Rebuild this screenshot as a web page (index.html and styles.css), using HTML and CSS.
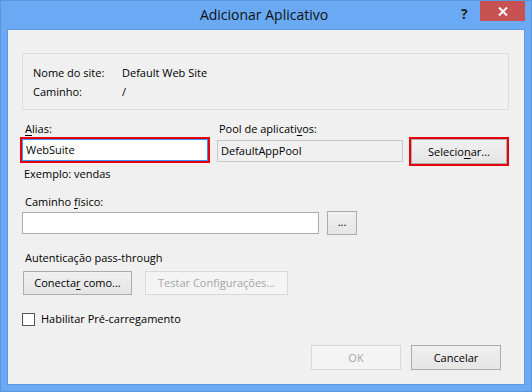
FILE: index.html
```html
<!DOCTYPE html>
<html lang="pt">
<head>
<meta charset="utf-8">
<title>Adicionar Aplicativo</title>
<link rel="stylesheet" href="styles.css">
</head>
<body>
<div class="window">
  <div class="titlebar">
    <div class="title">Adicionar Aplicativo</div>
    <div class="help">?</div>
    <div class="close">
      <svg width="10" height="9" viewBox="0 0 10 9"><path d="M1 0.5 L9 8.5 M9 0.5 L1 8.5" stroke="#fff" stroke-width="2" fill="none"/></svg>
    </div>
  </div>
  <div class="client">
    <div class="info">
      <div class="info-row"><span class="info-label">Nome do site:</span><span>Default Web Site</span></div>
      <div class="info-row"><span class="info-label">Caminho:</span><span>/</span></div>
    </div>

    <div class="alias-grid">
      <div class="label l-alias"><u>A</u>lias:</div>
      <div class="label l-pool">Pool de aplicati<u>v</u>os:</div>
      <div></div>
      <div class="textbox focus marked">WebSuite</div>
      <div class="textbox readonly">DefaultAppPool</div>
      <div class="button marked btn-sel"><span>Selecio<u>n</u>ar...</span></div>
    </div>

    <div class="hint">Exemplo: vendas</div>

    <div class="label l-path">Caminho <u>f</u>ísico:</div>
    <div class="path-row">
      <div class="textbox path-box"></div>
      <div class="button btn-browse"><span>...</span></div>
    </div>

    <div class="label l-auth">Autenticação pass-through</div>
    <div class="auth-row">
      <div class="button btn-connect"><span>Conecta<u>r</u> como...</span></div>
      <div class="button disabled btn-test"><span>Testar Confi<u>g</u>urações...</span></div>
    </div>

    <div class="check-row">
      <span class="checkbox"></span>
      <span class="check-label">Habilitar Pré-carregamento</span>
    </div>

    <div class="footer">
      <div class="button disabled btn-dlg"><span>OK</span></div>
      <div class="button btn-dlg"><span>Cancelar</span></div>
    </div>
  </div>
</div>
</body>
</html>
```

FILE: styles.css
```css
html, body {
  margin: 0;
  padding: 0;
  background: #6aa9f2;
}
body {
  width: 532px;
  height: 392px;
  overflow: hidden;
  font-family: "Open Sans", "Noto Sans", sans-serif;
  font-size: 11px;
  color: #000;
}
.window {
  box-sizing: border-box;
  width: 532px;
  height: 392px;
  background: #6aaaf4;
  border: 1px solid #5a98dc;
  display: flex;
  flex-direction: column;
  position: relative;
}
.titlebar {
  height: 28px;
  flex: none;
  display: flex;
  align-items: center;
  justify-content: center;
}
.title {
  font-size: 14px;
  color: #111;
  line-height: 20px;
  margin-top: 0;
  margin-right: 4px;
}
.help {
  position: absolute;
  left: 460px;
  top: 3px;
  font-size: 14px;
  font-weight: 700;
  color: #222;
  line-height: 20px;
}
.close {
  position: absolute;
  right: 6px;
  top: 0;
  width: 45px;
  height: 20px;
  background: #c75050;
  display: flex;
  align-items: center;
  justify-content: center;
}
.client {
  flex: 1;
  margin: 0 6px 6px;
  background: #f0f0f0;
  border: 1px solid #5b9ae2;
  display: flex;
  flex-direction: column;
  align-items: flex-start;
  line-height: 16px;
}
.info {
  box-sizing: border-box;
  margin: 23px 0 0 14px;
  width: 487px;
  height: 57px;
  border: 1px solid #dcdcdc;
  padding: 9px 0 0 10px;
  line-height: 19px;
}
.info-row {
  display: flex;
}
.info-label {
  width: 89px;
}
.alias-grid {
  margin: 11px 0 0 14px;
  display: grid;
  grid-template-columns: 195px 194px 96px;
  grid-template-rows: 16px 25px;
  row-gap: 2px;
  align-items: start;
}
.label {
  line-height: 16px;
  white-space: nowrap;
}
.l-alias { padding-left: 3px; }
.l-pool { padding-left: 2px; }
.textbox {
  box-sizing: border-box;
  width: 186px;
  height: 22px;
  border: 1px solid #abadb3;
  background: #fff;
  padding: 0 3px;
  line-height: 20px;
  white-space: nowrap;
}
.textbox.focus {
  border-color: #3399ff;
}
.textbox.readonly {
  background: #f0f0f0;
  border-color: #c8c8c8;
  margin-top: 1px;
}
.marked {
  outline: 2px solid #e8000d;
  outline-offset: 0;
}
.button {
  box-sizing: border-box;
  border: 1px solid #acacac;
  background: linear-gradient(#f0f0f0, #e5e5e5);
  display: flex;
  align-items: center;
  justify-content: center;
  white-space: nowrap;
}
.button.disabled {
  border-color: #d9d9d9;
  background: #f4f4f4;
  color: #a6a6a6;
}
.btn-sel {
  width: 96px;
  height: 25px;
}
.hint {
  margin: 2px 0 0 16px;
}
.l-path {
  margin: 12px 0 0 17px;
}
.path-row {
  margin: 1px 0 0 14px;
  display: flex;
  align-items: center;
  gap: 8px;
}
.path-box {
  width: 297px;
}
.btn-browse {
  width: 30px;
  height: 24px;
  padding-bottom: 3px;
}
.l-auth {
  margin: 15px 0 0 17px;
}
.auth-row {
  margin: 5px 0 0 15px;
  display: flex;
  gap: 13px;
}
.btn-connect {
  width: 109px;
  height: 24px;
}
.btn-test {
  width: 143px;
  height: 24px;
}
.check-row {
  margin: 16px 0 0 14px;
  display: flex;
  align-items: center;
  height: 16px;
}
.checkbox {
  box-sizing: border-box;
  width: 13px;
  height: 13px;
  border: 1px solid #555;
  background: #fff;
}
.check-label {
  margin-left: 6px;
}
.footer {
  align-self: flex-end;
  margin: 18px 23px 0 0;
  display: flex;
  gap: 10px;
}
.btn-dlg {
  width: 90px;
  height: 25px;
}
u {
  text-decoration-thickness: 1px;
  text-underline-offset: 2px;
}
```
